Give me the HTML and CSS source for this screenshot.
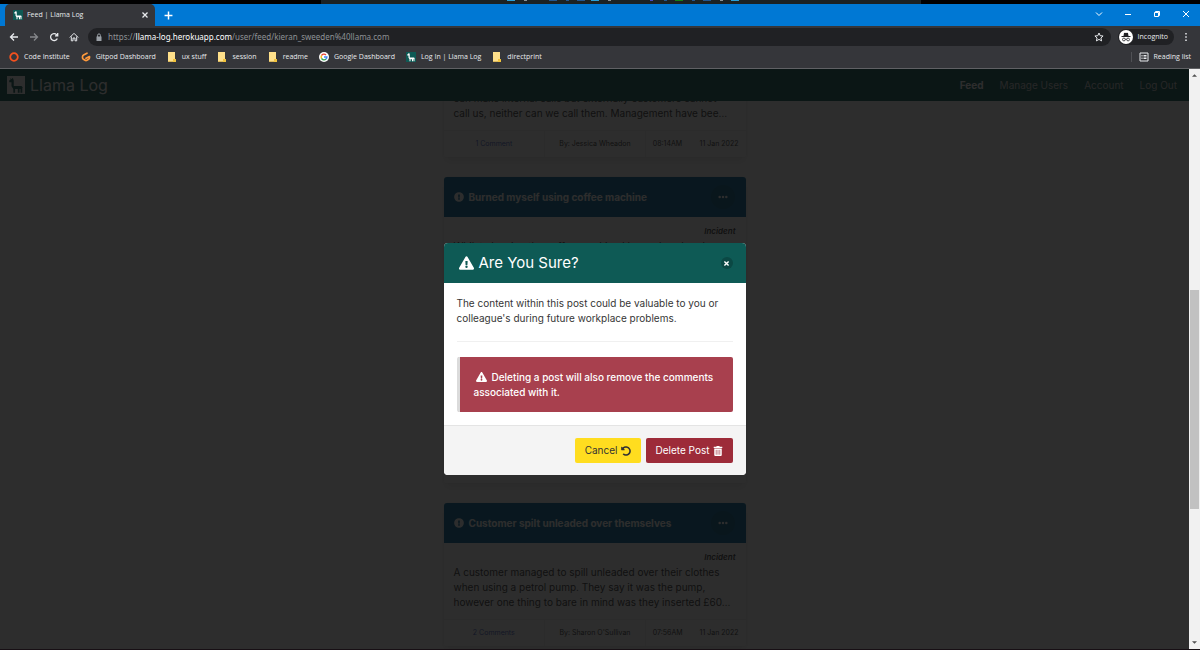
FILE: index.html
```html
<!DOCTYPE html>
<html lang="en">
<head>
<meta charset="utf-8">
<title>Feed | Llama Log</title>
<link rel="stylesheet" href="styles.css">
</head>
<body>
<svg class="sprite" aria-hidden="true">
  <symbol id="llama" viewBox="0 0 20 20"><path d="M4 2l1.200 1.500L6.500 2l1 3v6h8.500l1.500 1.500-.5 1v5h-2v-4h-1v4h-2v-4H9v4H7v-4l-2-3V7H2.500V5L4 4z"/></symbol>
  <symbol id="warn" viewBox="0 0 576 512"><path d="M569.500 440C588 472 564.800 512 527.900 512H48.100c-36.900 0-60-40-41.600-72L246.400 24c18.500-32 64.700-32 83.200 0zM288 354a46 46 0 1 0 0 92 46 46 0 0 0 0-92zm-43.700-165.300l7.400 136c.4 6.400 5.700 11.300 12 11.300h48.500c6.300 0 11.600-4.900 12-11.300l7.400-136c.4-6.900-5.100-12.700-12-12.700h-63.400c-6.900 0-12.300 5.800-11.900 12.700z"/></symbol>
  <symbol id="info" viewBox="0 0 512 512"><path d="M504 256a248 248 0 1 1-496 0 248 248 0 0 1 496 0zM256 306a46 46 0 1 0 0 92 46 46 0 0 0 0-92zm-43.700-165.300l7.400 136c.4 6.400 5.700 11.300 12 11.300h48.500c6.300 0 11.600-4.900 12-11.300l7.400-136c.4-6.900-5.100-12.700-12-12.700h-63.400c-6.900 0-12.300 5.800-11.900 12.700z"/></symbol>
  <symbol id="undo" viewBox="0 0 512 512"><path d="M255.500 8c-66.300.1-126.400 26.200-170.900 68.700L49 41C33.900 25.900 8 36.600 8 58v134c0 13.300 10.700 24 24 24h134c21.400 0 32.100-25.900 17-41l-41.800-41.700c30.900-28.900 70.800-44.900 113.200-45.300 92.400-.8 170.300 74 169.500 169.400C423.200 348 349.800 424 256 424c-41.100 0-80-14.700-110.600-41.600-4.700-4.200-11.900-3.900-16.400.6l-39.700 39.700c-4.900 4.900-4.600 12.800.5 17.400C133.800 479.800 192.100 504 256 504c137 0 248-111 248-248C504 119.200 392.400 7.800 255.500 8z"/></symbol>
  <symbol id="trash" viewBox="0 0 448 512"><path d="M32 464a48 48 0 0 0 48 48h288a48 48 0 0 0 48-48V128H32zm272-256a16 16 0 0 1 32 0v224a16 16 0 0 1-32 0zm-96 0a16 16 0 0 1 32 0v224a16 16 0 0 1-32 0zm-96 0a16 16 0 0 1 32 0v224a16 16 0 0 1-32 0zM432 32H312l-9-19A24 24 0 0 0 281 0H167a24 24 0 0 0-22 13l-9 19H16A16 16 0 0 0 0 48v32a16 16 0 0 0 16 16h416a16 16 0 0 0 16-16V48a16 16 0 0 0-16-16z"/></symbol>
  <symbol id="cross" viewBox="0 0 10 10"><path d="M2 2l6 6M8 2L2 8" fill="none" stroke="currentColor" stroke-width="2"/></symbol>
  <symbol id="dots" viewBox="0 0 12 4"><circle cx="2" cy="2" r="1.500"/><circle cx="6" cy="2" r="1.500"/><circle cx="10" cy="2" r="1.500"/></symbol>
  <symbol id="folder" viewBox="0 0 10 10"><path fill="#ffe08a" d="M1 0h7v7H1z"/><path fill="#ffe08a" d="M1 6h5v4H1z"/><path fill="#f2c43d" d="M6 7h3v3H6z"/><path fill="#dcb95c" d="M1 9h5v1H1z"/></symbol>
</svg>

<div class="browser">
  <div class="taskbar">
    <div class="taskbar-items"><i class="c1"></i><i class="c2 dot"></i><i></i><i class="c3"></i><i class="c3 dot"></i><i class="c3"></i><i class="c1"></i><i class="c2 dot"></i><i></i><i></i><i class="c4 dot"></i><i class="c3 dot"></i><i class="c5"></i><i class="c3 dot"></i><i class="c3"></i><i class="c2 dot"></i><i class="c1"></i></div>
  </div>
  <div class="tabs">
    <div class="tab">
      <svg class="favicon"><use href="#llama"/></svg>
      <span class="tab-title">Feed | Llama Log</span>
      <button class="plain" aria-label="Close tab"><svg class="i8" viewBox="0 0 8 8"><path d="M1.500 1.500l5 5M6.500 1.500l-5 5"/></svg></button>
    </div>
    <button class="plain new-tab" aria-label="New tab"><svg class="i9" viewBox="0 0 8 8"><path d="M4 .5v7M.5 4h7"/></svg></button>
    <div class="window-buttons">
      <button class="plain" aria-label="Search tabs"><svg class="i8 thin" viewBox="0 0 8 8"><path d="M1 2.500l3 3 3-3"/></svg></button>
      <button class="plain" aria-label="Minimise"><svg class="i8 thin" viewBox="0 0 8 8"><path d="M1 4.500h6"/></svg></button>
      <button class="plain" aria-label="Restore"><svg class="i8 thin" viewBox="0 0 8 8"><path d="M1.500 2.500h4v4h-4zM2.500 2V1.500h4v4H6"/></svg></button>
      <button class="plain" aria-label="Close window"><svg class="i8 thin" viewBox="0 0 8 8"><path d="M1 1l6 6M7 1L1 7"/></svg></button>
    </div>
  </div>
  <div class="toolbar">
    <div class="nav-buttons">
      <button class="plain" aria-label="Back"><svg class="i10" viewBox="0 0 10 10"><path d="M9 5H1.500M5 1.500L1.500 5 5 8.500"/></svg></button>
      <button class="plain dim" aria-label="Forward"><svg class="i10" viewBox="0 0 10 10"><path d="M1 5h7.500M5 1.500L8.500 5 5 8.500"/></svg></button>
      <button class="plain" aria-label="Reload"><svg class="i10" viewBox="0 0 10 10"><path d="M8.300 6.500A3.500 3.500 0 1 1 7.600 2.600L8.500 3.500M8.700 1v2.800H6"/></svg></button>
      <button class="plain" aria-label="Home"><svg class="i10 thin" viewBox="0 0 10 10"><path d="M.8 5.500L5 1.300l4.200 4.200M2.300 4.500v4.300h1.700V6h2v2.800h1.700V4.500"/></svg></button>
    </div>
    <div class="address">
      <svg class="lock" viewBox="0 0 8 8"><path d="M1.500 3.500h5V8h-5z" fill="#9aa0a6"/><path d="M2.600 4V2.300a1.400 1.400 0 0 1 2.800 0V4" fill="none" stroke="#9aa0a6"/></svg>
      <span class="url">https://<b>llama-log.herokuapp.com</b>/user/feed/kieran_sweeden%40llama.com</span>
      <button class="plain" aria-label="Bookmark"><svg class="i10 thin" viewBox="0 0 10 10"><path d="M5 1l1.200 2.700 2.900.3-2.200 2 .7 2.900L5 7.400 2.400 8.900 3.100 6 .9 4l2.900-.3z"/></svg></button>
    </div>
    <div class="profile">
      <svg class="spy" viewBox="0 0 14 14"><circle cx="7" cy="7" r="7" fill="#fff"/><path d="M4.500 6L5 3l1-.3 1 .3 1-.3 1 .3.500 3zM2.500 6h9v1h-9z" fill="#202124"/><g fill="none" stroke="#202124" stroke-width=".8"><circle cx="4.900" cy="9.500" r="1.400"/><circle cx="9.100" cy="9.500" r="1.400"/><path d="M6.300 9.300q.7-.5 1.400 0"/></g></svg>
      <span>Incognito</span>
    </div>
    <button class="plain menu" aria-label="Menu"><svg class="i10" viewBox="0 0 10 10"><path d="M5 1v1.500M5 4.300v1.500M5 7.500V9"/></svg></button>
  </div>
  <div class="bookmarks">
    <a href="#"><svg viewBox="0 0 10 10"><circle cx="5" cy="5" r="3.800" fill="none" stroke="#f4511e" stroke-width="1.800"/></svg>Code Institute</a>
    <a href="#"><svg viewBox="0 0 10 10"><path d="M6 1.200L2.600 3Q1.500 3.600 1.500 4.800v1q0 1 .9 1.500l1.700 1q.9.500 1.800 0l1.700-1q.9-.5.9-1.500V4.500L5 6.300" fill="none" stroke="#ff9a3c" stroke-width="1.700" stroke-linejoin="round" stroke-linecap="round"/></svg>Gitpod Dashboard</a>
    <a href="#"><svg><use href="#folder"/></svg>ux stuff</a>
    <a href="#"><svg><use href="#folder"/></svg>session</a>
    <a href="#"><svg><use href="#folder"/></svg>readme</a>
    <a href="#"><svg viewBox="0 0 10 10"><circle cx="5" cy="5" r="5" fill="#fff"/><g fill="none" stroke-width="1.400"><path d="M7 2.900A2.900 2.900 0 0 0 2.500 3.600" stroke="#ea4335"/><path d="M2.500 3.600a2.900 2.900 0 0 0 0 2.800" stroke="#fbbc05"/><path d="M2.500 6.400A2.900 2.900 0 0 0 7 7.100" stroke="#34a853"/><path d="M7 7.100A2.900 2.900 0 0 0 7.900 5H5" stroke="#4285f4"/></g></svg>Google Dashboard</a>
    <a href="#"><svg class="favicon"><use href="#llama"/></svg>Log In | Llama Log</a>
    <a href="#"><svg><use href="#folder"/></svg>directprint</a>
    <a href="#" class="reading"><svg viewBox="0 0 10 10"><path d="M1 1h8v8H1zM2.500 3.500h1M2.500 5h1M2.500 6.500h1M4.500 3.500h3M4.500 5h3M4.500 6.500h3" fill="none" stroke="#e8eaed"/></svg>Reading list</a>
  </div>

  <div class="viewport">
    <div class="page">
      <header class="site-nav">
        <a class="brand" href="#"><svg viewBox="0 0 20 20"><path d="M0 0h20v20H0z"/><use href="#llama" class="brand-llama"/></svg>Llama Log</a>
        <nav><a href="#" class="current">Feed</a><a href="#">Manage Users</a><a href="#">Account</a><a href="#">Log Out</a></nav>
      </header>
      <main class="feed">
        <article class="card">
          <div class="card-head"></div>
          <div class="card-body tail"><p>can make internal calls but externally customers cannot<br>call us, neither can we call them. Management have bee…</p></div>
          <div class="card-foot"><a href="#">1 Comment</a><span>By: Jessica Wheadon</span><span class="when"><time>08:14AM</time><time>11 Jan 2022</time></span></div>
        </article>
        <article class="card">
          <div class="card-head"><svg><use href="#info"/></svg><h2>Burned myself using coffee machine</h2><button aria-label="Post options"><svg><use href="#dots"/></svg></button></div>
          <div class="card-body"><em>Incident</em><p>Whilst cleaning the coffee machine I burned my hand</p></div>
          <div class="card-foot"></div>
        </article>
        <article class="card">
          <div class="card-head"></div>
          <div class="card-body"></div>
          <div class="card-foot"></div>
        </article>
        <article class="card">
          <div class="card-head"><svg><use href="#info"/></svg><h2>Customer spilt unleaded over themselves</h2><button aria-label="Post options"><svg><use href="#dots"/></svg></button></div>
          <div class="card-body"><em>Incident</em><p>A customer managed to spill unleaded over their clothes<br>when using a petrol pump. They say it was the pump,<br>however one thing to bare in mind was they inserted £60…</p></div>
          <div class="card-foot"><a href="#">2 Comments</a><span>By: Sharon O'Sullivan</span><span class="when"><time>07:56AM</time><time>11 Jan 2022</time></span></div>
        </article>
      </main>
      <div class="overlay">
        <section class="modal" role="dialog" aria-modal="true" aria-labelledby="modal-title">
          <header><svg><use href="#warn"/></svg><h1 id="modal-title">Are You Sure?</h1><button aria-label="Close"><svg><use href="#cross"/></svg></button></header>
          <div class="modal-body">
            <p>The content within this post could be valuable to you or colleague's during future workplace problems.</p>
            <hr>
            <p class="notice"><svg><use href="#warn"/></svg>Deleting a post will also remove the comments associated with it.</p>
          </div>
          <footer>
            <button class="cancel">Cancel<svg><use href="#undo"/></svg></button>
            <button class="delete">Delete Post<svg><use href="#trash"/></svg></button>
          </footer>
        </section>
      </div>
    </div>
    <div class="scrollbar"><svg viewBox="0 0 6 4"><path d="M0 4l3-3 3 3z"/></svg><div class="track"><div class="thumb"></div></div><svg viewBox="0 0 6 4"><path d="M0 0l3 3 3-3z"/></svg></div>
  </div>
</div>
</body>
</html>
```
FILE: styles.css
```css
* { box-sizing: border-box; }
body { margin: 0; background: #170f14; }
h1, h2, p { margin: 0; }
a { color: inherit; text-decoration: none; }
button { font: inherit; border: 0; cursor: pointer; }
svg { display: block; flex: none; fill: currentColor; }
.sprite { display: none; }

/* Browser window */
.browser { height: 100vh; display: flex; flex-direction: column; padding-bottom: 1px; font: 7px/10px "Open Sans", "Noto Sans", sans-serif; color: #e8eaed; }
.plain { display: flex; padding: 0; background: none; color: inherit; }
.plain svg { fill: none; stroke: currentColor; stroke-width: 1.300; }
.plain .thin { stroke-width: 1; }
.i8 { width: 8px; height: 8px; }
.i9 { width: 9px; height: 9px; }
.i10 { width: 10px; height: 10px; }
.dim { color: #85878b; }
.favicon { background: #0e5a55; color: #fff; }

.taskbar { height: 4px; flex: none; background: #000; padding: 0 279px 0 321px; }
.taskbar-items { height: 4px; background: #1b2224; display: flex; justify-content: flex-start; gap: 6px; padding-left: 186px; }
.taskbar-items i { width: 8px; height: 1px; }
.taskbar-items .dot { width: 3px; height: 1px; margin: 0 2px 0 3px; }
.c1 { background: #2a9fd6; }
.c2 { background: #8b9296; }
.c3 { background: #23568f; }
.c4 { background: #4747c2; }
.c5 { background: #168016; }

.tabs { height: 22px; flex: none; display: flex; align-items: center; background: #0078d4; padding-left: 5px; }
.tab { width: 150px; height: 22px; display: flex; align-items: center; gap: 4px; padding: 0 6px 0 8px; background: #35363a; border-radius: 5px 5px 0 0; }
.tab .favicon { width: 10px; height: 10px; }
.tab-title { flex: 1; }
.new-tab { margin-left: 9px; color: #fff; }
.window-buttons { margin-left: auto; display: flex; gap: 21px; padding: 0 10px 2px 0; color: #fff; }

.toolbar { height: 20px; flex: none; display: flex; align-items: center; background: #35363a; padding: 2px 9px 0 9px; }
.nav-buttons { display: flex; gap: 10px; padding-right: 9px; }
.address { flex: 1; height: 18px; display: flex; align-items: center; border-radius: 9px; background: #202124; padding: 0 7px 0 7px; }
.lock { width: 8px; height: 8px; }
.url { flex: 1; margin-left: 5px; font-family: "Noto Sans", sans-serif; font-size: 8px; color: #8e9195; }
.url b { font-weight: 400; color: #fff; }
.profile { display: flex; align-items: center; gap: 5px; height: 16px; margin-left: 7px; padding: 0 6px 0 1px; border-radius: 8px; background: #202124; }
.spy { width: 14px; height: 14px; }
.menu { margin-left: 7px; }
.menu svg { stroke-width: 1.500; }

.bookmarks { height: 23px; flex: none; display: flex; align-items: center; gap: 11px; padding: 0 9px; background: #35363a; border-bottom: 1px solid #606164; }
.bookmarks a { display: flex; align-items: center; gap: 5px; }
.bookmarks svg { width: 10px; height: 10px; }
.bookmarks .reading { margin-left: auto; padding-left: 7px; border-left: 1px solid #505155; }

/* Page */
.viewport { flex: 1; min-height: 0; display: flex; }
.page { position: relative; flex: 1; min-width: 0; display: flex; flex-direction: column; background: #fff; font: 10px/15px Inter, "Open Sans", sans-serif; color: #363636; }
.site-nav { height: 32px; flex: none; display: flex; align-items: center; justify-content: space-between; padding: 0 12px 0 7px; background: #0e5a55; color: #fff; }
.brand { display: flex; align-items: center; gap: 5px; font-size: 16px; }
.brand svg { width: 18px; height: 18px; }
.brand-llama { fill: #0e5a55; color: #0e5a55; }
.site-nav nav { display: flex; gap: 16px; color: #d0d0d0; }
.site-nav .current { font-weight: 700; color: #fff; }

.feed { flex: 1; min-height: 0; overflow: hidden; display: flex; flex-direction: column; justify-content: flex-end; align-items: center; gap: 20px; padding-bottom: 3px; }
.card { width: 302px; height: 143px; flex: none; display: flex; flex-direction: column; border-radius: 3px; box-shadow: 0 5px 10px -1px rgba(10, 10, 10, .1), 0 0 0 1px rgba(10, 10, 10, .02); }
.card-head { height: 40px; display: flex; align-items: center; gap: 5px; padding: 0 11px 0 10px; border-radius: 3px 3px 0 0; background: #036799; color: #fff; }
.card-head > svg { width: 10px; height: 10px; }
.card-head h2 { flex: 1; font-size: 10px; font-weight: 700; }
.card-head button { width: 24px; height: 24px; display: grid; place-items: center; padding: 0; border-radius: 12px; background: #0a0a0a22; color: #fff; }
.card-head button svg { width: 10px; height: 4px; }
.card-body { flex: 1; padding: 7px 10px 9px; white-space: nowrap; }
.card-body.tail { display: flex; align-items: flex-end; }
.card-body em { display: block; text-align: right; font-size: 8px; font-weight: 600; }
.card-foot { height: 27px; display: grid; grid-template-columns: repeat(3, 1fr); border-top: 1px solid #ededed; font-size: 7px; text-align: center; align-items: center; white-space: nowrap; }
.card-foot > * { line-height: 26px; }
.card-foot > * + * { border-left: 1px solid #ededed; }
.card-foot a { color: #485fc7; }
.when { display: flex; justify-content: space-between; padding: 0 7px; }

/* Confirmation dialog */
.overlay { position: absolute; inset: 0; display: grid; place-items: center; background: rgba(10, 10, 10, .86); }
.modal { width: 302px; border-radius: 4px; overflow: hidden; background: #fff; }
.modal header { height: 40px; display: flex; align-items: center; gap: 5px; padding: 0 13px 0 15px; background: #0e5a55; color: #fff; }
.modal header > svg { width: 15px; height: 14px; }
.modal h1 { flex: 1; font-size: 15px; line-height: 20px; font-weight: 400; }
.modal header button { width: 12px; height: 12px; display: grid; place-items: center; padding: 0; border-radius: 6px; background: #0b4844; color: #fff; }
.modal header button svg { width: 7px; height: 7px; }
.modal-body { padding: 13px; }
.modal hr { height: 1px; margin: 15px 0; border: 0; background: #f0f0f0; }
.notice { padding: 13px 14px 12px; border-left: 3px solid #dbdbdb; border-radius: 2px; background: #a8404e; color: #fff; font-weight: 500; }
.notice svg { display: inline-block; width: 11px; height: 10px; margin: 0 5px 0 2px; vertical-align: -1px; }
.modal footer { display: flex; justify-content: flex-end; gap: 5px; padding: 12px 13px; border-top: 1px solid #e4e4e4; background: #f4f4f4; }
.modal footer button { height: 25px; display: flex; align-items: center; gap: 3px; padding: 0 10px; border-radius: 2px; }
.modal footer svg { width: 10px; height: 10px; }
.cancel { background: #ffdd1f; color: #333; }
.delete { background: #9d2b39; color: #fff; }

.scrollbar { width: 11px; display: flex; flex-direction: column; align-items: center; padding: 4px 0; background: #f1f1f1; color: #505050; }
.scrollbar svg { width: 5px; height: 4px; }
.track { flex: 1; width: 9px; display: grid; grid-template-rows: 213fr 218fr 132fr; }
.thumb { grid-row: 2; background: #c1c1c1; }
```
